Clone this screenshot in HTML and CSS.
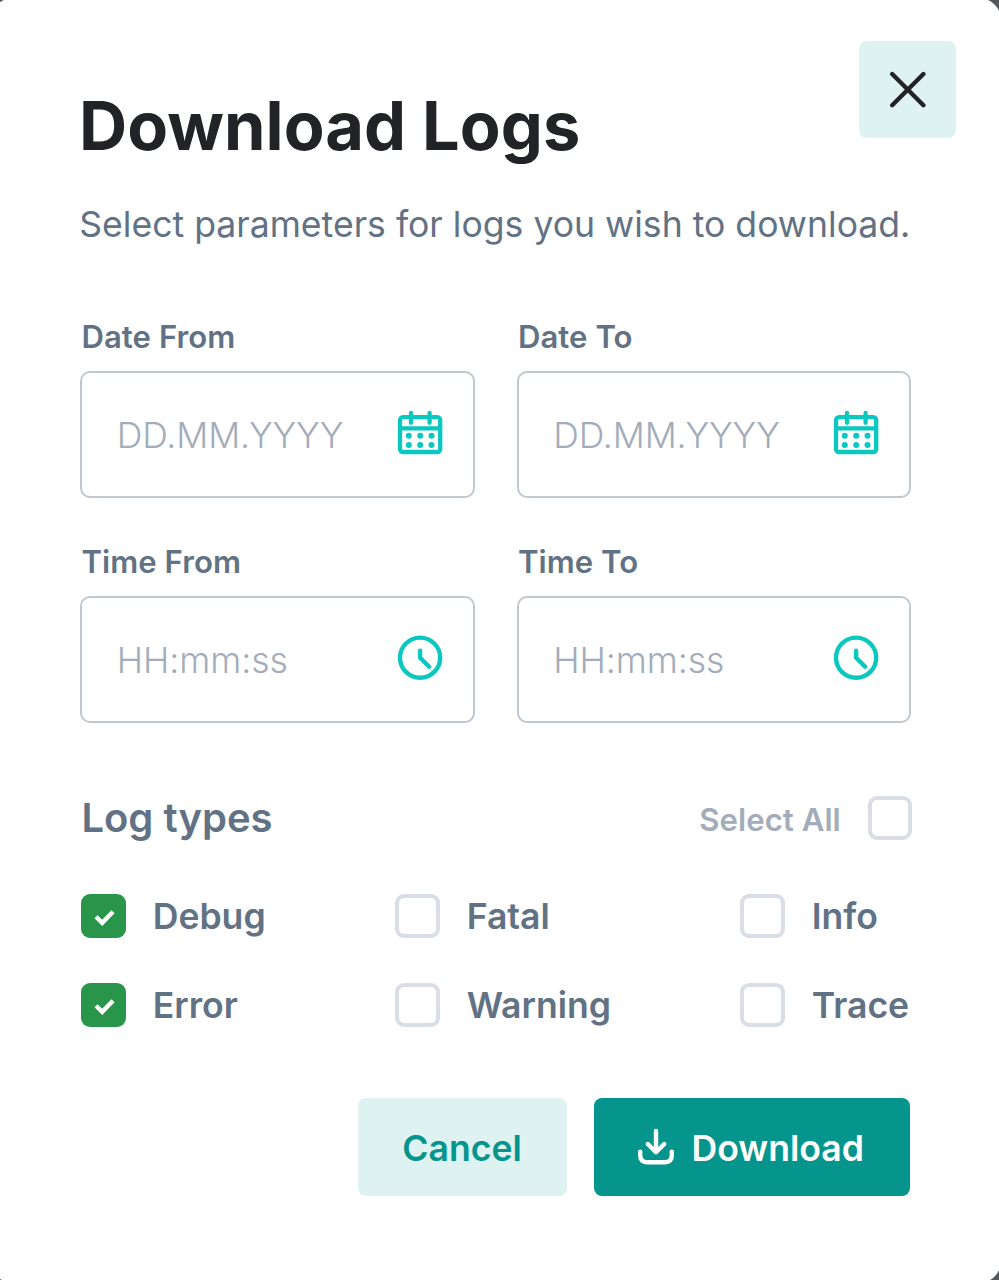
FILE: index.html
```html
<!DOCTYPE html>
<html lang="en">
<head>
<meta charset="utf-8">
<title>Download Logs</title>
<link rel="stylesheet" href="styles.css">
</head>
<body>
<svg class="sprite" width="0" height="0">
  <symbol id="calendar" viewBox="0 0 48 48">
    <g fill="none" stroke="currentColor" stroke-width="4.3" stroke-linecap="round">
      <rect x="4" y="8.6" width="40.2" height="34.8" rx="3"/>
      <path d="M4 19.7H44M15 4.4V14.2M33.6 4.4V14.2"/>
    </g>
    <g fill="currentColor">
      <circle cx="12.8" cy="27.2" r="3"/><circle cx="24.2" cy="27.2" r="3"/><circle cx="35.5" cy="27.2" r="3"/>
      <circle cx="12.8" cy="36.4" r="3"/><circle cx="24.2" cy="36.4" r="3"/><circle cx="35.5" cy="36.4" r="3"/>
    </g>
  </symbol>
  <symbol id="clock" viewBox="0 0 48 48">
    <g fill="none" stroke="currentColor" stroke-width="4.4" stroke-linecap="round" stroke-linejoin="round">
      <circle cx="24.1" cy="24.1" r="20.1"/>
      <path d="M24.1 17V24.2L33.2 33.2"/>
    </g>
  </symbol>
  <symbol id="check" viewBox="0 0 45 45">
    <path d="M15 22.7L21.2 28.8L32 17.8" fill="none" stroke="currentColor" stroke-width="4.4"/>
  </symbol>
</svg>
<main class="modal">
  <header class="head">
    <div>
      <h1 class="title">Download Logs</h1>
      <p class="subtitle">Select parameters for logs you wish to download.</p>
    </div>
    <button class="close" aria-label="Close">
      <svg width="38" height="38" viewBox="0 0 38 38"><path d="M3.2 4L34.4 35.2M34.4 4L3.2 35.2" fill="none" stroke="currentColor" stroke-width="4.4" stroke-linecap="round"/></svg>
    </button>
  </header>

  <section class="fields">
    <div class="field"><span class="label">Date From</span>
      <div class="input date"><span>DD.MM.YYYY</span><svg class="icon"><use href="#calendar"/></svg></div></div>
    <div class="field"><span class="label">Date To</span>
      <div class="input date"><span>DD.MM.YYYY</span><svg class="icon"><use href="#calendar"/></svg></div></div>
    <div class="field"><span class="label">Time From</span>
      <div class="input time"><span>HH:mm:ss</span><svg class="icon"><use href="#clock"/></svg></div></div>
    <div class="field"><span class="label">Time To</span>
      <div class="input time"><span>HH:mm:ss</span><svg class="icon"><use href="#clock"/></svg></div></div>
  </section>

  <section class="types-head">
    <h2 class="types-title">Log types</h2>
    <div class="select-all"><span>Select All</span><span class="box"></span></div>
  </section>

  <section class="types">
    <div class="option"><span class="box checked"><svg><use href="#check"/></svg></span><span class="name">Debug</span></div>
    <div class="option"><span class="box"></span><span class="name">Fatal</span></div>
    <div class="option"><span class="box"></span><span class="name">Info</span></div>
    <div class="option"><span class="box checked"><svg><use href="#check"/></svg></span><span class="name">Error</span></div>
    <div class="option"><span class="box"></span><span class="name">Warning</span></div>
    <div class="option"><span class="box"></span><span class="name">Trace</span></div>
  </section>

  <footer class="actions">
    <button class="btn cancel"><span>Cancel</span></button>
    <button class="btn download">
      <svg width="38" height="38" viewBox="0 0 38 38"><path d="M19 3.2V24M10.8 16.2L19 24.4L27.2 16.2M3.2 23.8V27.5Q3.2 34.4 10 34.4H28Q34.8 34.4 34.8 27.5V23.8" fill="none" stroke="currentColor" stroke-width="4.4" stroke-linecap="round" stroke-linejoin="round"/></svg>
      <span>Download</span>
    </button>
  </footer>
</main>
</body>
</html>
```
FILE: styles.css
```css
* { box-sizing: border-box; }
body {
  margin: 0;
  height: 1280px;
  overflow: hidden;
  display: flow-root;
  background: #555659;
  font-family: Inter, "Liberation Sans", sans-serif;
  color: #627285;
}
h1, h2, p { margin: 0; }
button { border: 0; padding: 0; font: inherit; }
.sprite { display: block; height: 0; }
.modal {
  width: 1010px;
  height: 1285px;
  margin: -2px 0 0 -9px;
  padding: 42.6px 44.6px 0 89px;
  border-radius: 22px;
  background: #fff;
}
.head { display: flex; justify-content: space-between; height: 275px; }
.head > div { width: 0; padding-top: 45.4px; white-space: nowrap; }
.title { margin-left: -1px; font-size: 66.7px; line-height: 80px; font-weight: 700; letter-spacing: 0.06px; color: #222327; }
.subtitle { margin: 35px 0 0 -0.8px; font-size: 35.6px; line-height: 48px; letter-spacing: 0.01px; }
.close {
  width: 97.6px; height: 97.6px;
  display: flex; align-items: center; justify-content: center;
  border-radius: 8px;
  background: #def3f1;
  color: #222327;
}
.fields {
  width: 831px;
  display: grid;
  grid-template-columns: 394.5px 394.5px;
  column-gap: 42px;
  row-gap: 43px;
}
.label { display: block; height: 55.5px; padding-left: 1.4px; font-size: 31.1px; line-height: 42.8px; font-weight: 600; letter-spacing: 0.06px; }
.input {
  height: 126.5px;
  display: flex; align-items: center; justify-content: space-between;
  padding: 0 28.8px 0 34.8px;
  border: 2.2px solid #c2c6d1;
  border-radius: 10px;
  color: #a3acba;
  font-size: 35.6px;
  font-weight: 300;
  letter-spacing: -0.08px;
}
.input span { padding-top: 3px; }
.icon { width: 48px; height: 48px; color: #0ac8c0; transform: translateY(-1.4px); }
.types-head {
  width: 832.4px; height: 45px; margin-top: 72.9px;
  display: flex; justify-content: space-between; align-items: center;
}
.types-title { padding-left: 1.4px; font-size: 40px; line-height: 48px; font-weight: 600; transform: translateY(-0.5px); }
.select-all { display: flex; align-items: center; gap: 27px; color: #a3acba; font-size: 31.1px; font-weight: 600; letter-spacing: 0.05px; }
.select-all span:first-child { padding-top: 4px; }
.box { flex: none; width: 44.6px; height: 44.6px; border: 4.4px solid #d9dde6; border-radius: 9px; }
.checked { border: 0; background: #28954a; color: #fff; }
.checked svg { display: block; width: 45px; height: 45px; }
.types {
  margin: 53px 0 0 1.3px;
  display: grid;
  grid-template-columns: 314px 345px auto;
  row-gap: 44px;
}
.option { display: flex; align-items: center; gap: 26.8px; height: 45px; font-size: 35.6px; font-weight: 600; }
.name { padding-top: 2px; }
.actions { width: 830px; margin-top: 71px; display: flex; justify-content: flex-end; gap: 27px; }
.btn {
  height: 98px;
  display: flex; align-items: center; justify-content: center;
  border-radius: 8px;
  font-size: 35.6px; font-weight: 600;
}
.btn span { padding-top: 2px; }
.cancel { width: 209px; background: #def3f1; color: #05958d; }
.download { width: 316.5px; gap: 17px; padding-right: 3px; background: #05958d; color: #fff; }
.download svg { transform: translateY(-0.2px); }
```
